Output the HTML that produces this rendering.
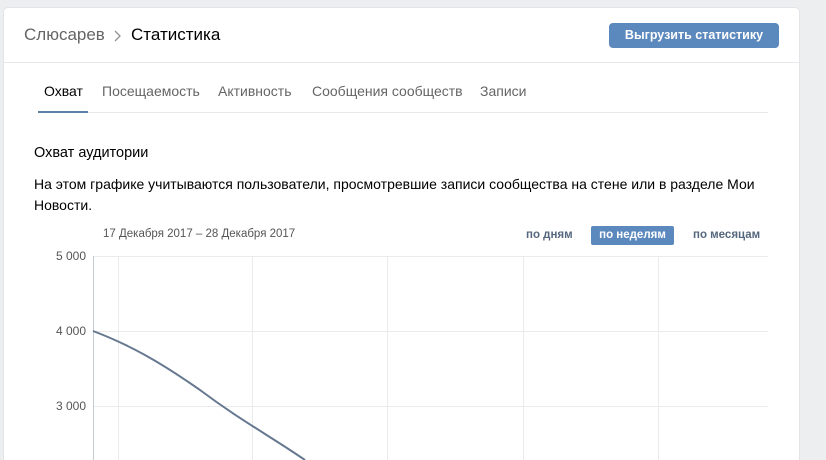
<!DOCTYPE html><html><head><meta charset="utf-8"><style>
html,body{margin:0;width:826px;height:460px;overflow:hidden}
body{background:#edeef0;font-family:"Liberation Sans",sans-serif;position:relative}
.card{position:absolute;left:4px;top:8px;width:795px;height:452px;background:#fff;border-radius:4px 4px 0 0;box-shadow:0 0 0 1px #e3e4e8}
.a{position:absolute;white-space:nowrap}
.t{position:absolute;top:83px;font-size:14px;color:#656565}
</style></head><body>
<div class="card"></div>
<div class="a" style="left:24px;top:25px;font-size:17px;color:#656565">Слюсарев</div>
<svg class="a" style="left:113px;top:29px" width="10" height="14"><path d="M2 2 L7 7 L2 12" fill="none" stroke="#939393" stroke-width="1.3"/></svg>
<div class="a" style="left:131px;top:25px;font-size:17px;color:#000">Статистика</div>
<div class="a" style="left:609px;top:23px;width:170px;height:25px;background:#5b88bd;border-radius:4px;color:#fff;font-size:12.5px;font-weight:bold;text-align:center;line-height:25px">Выгрузить статистику</div>
<div class="a" style="left:4px;top:62px;width:795px;height:1px;background:#e7e8ec"></div>
<div class="t" style="left:44px;color:#000">Охват</div>
<div class="t" style="left:102px">Посещаемость</div>
<div class="t" style="left:218px">Активность</div>
<div class="t" style="left:312px">Сообщения сообществ</div>
<div class="t" style="left:480px">Записи</div>
<div class="a" style="left:38px;top:112px;width:730px;height:1px;background:#e7e8ec"></div>
<div class="a" style="left:38px;top:111px;width:50px;height:2px;background:#5e81a8"></div>
<div class="a" style="left:34px;top:145px;font-size:14.5px;color:#000">Охват аудитории</div>
<div class="a" style="left:34px;top:174px;font-size:14px;color:#000;line-height:21px;white-space:normal;width:760px">На этом графике учитываются пользователи, просмотревшие записи сообщества на стене или в разделе Мои Новости.</div>
<div class="a" style="left:103px;top:228px;font-size:11.5px;color:#555">17 Декабря 2017 – 28 Декабря 2017</div>
<div class="a" style="left:526px;top:229px;font-size:11.5px;font-weight:bold;color:#55677d">по дням</div>
<div class="a" style="left:591px;top:226px;width:83px;height:19px;background:#5b88bd;border-radius:2px;color:#fff;font-size:11.5px;font-weight:bold;text-align:center;line-height:19px">по неделям</div>
<div class="a" style="left:693px;top:229px;font-size:11.5px;font-weight:bold;color:#55677d">по месяцам</div>
<svg class="a" style="left:0;top:0" width="826" height="460">
<g stroke="#ebebeb" stroke-width="1">
<line x1="93" y1="256.5" x2="768" y2="256.5"/><line x1="93" y1="331.5" x2="768" y2="331.5"/><line x1="93" y1="406.5" x2="768" y2="406.5"/>
<line x1="118.5" y1="256" x2="118.5" y2="460"/><line x1="252.5" y1="256" x2="252.5" y2="460"/><line x1="387.5" y1="256" x2="387.5" y2="460"/><line x1="523.5" y1="256" x2="523.5" y2="460"/><line x1="658.5" y1="256" x2="658.5" y2="460"/>
</g>
<line x1="93.5" y1="256" x2="93.5" y2="460" stroke="#c5ccd6"/>
<path d="M93 331 C130 345 160 362 200 390 C240 420 270 436 305 460" fill="none" stroke="#66788f" stroke-width="2"/>
<g font-family="Liberation Sans" font-size="12" fill="#555" text-anchor="end">
<text x="86" y="260">5 000</text><text x="86" y="335">4 000</text><text x="86" y="410">3 000</text></g>
</svg>
</body></html>
